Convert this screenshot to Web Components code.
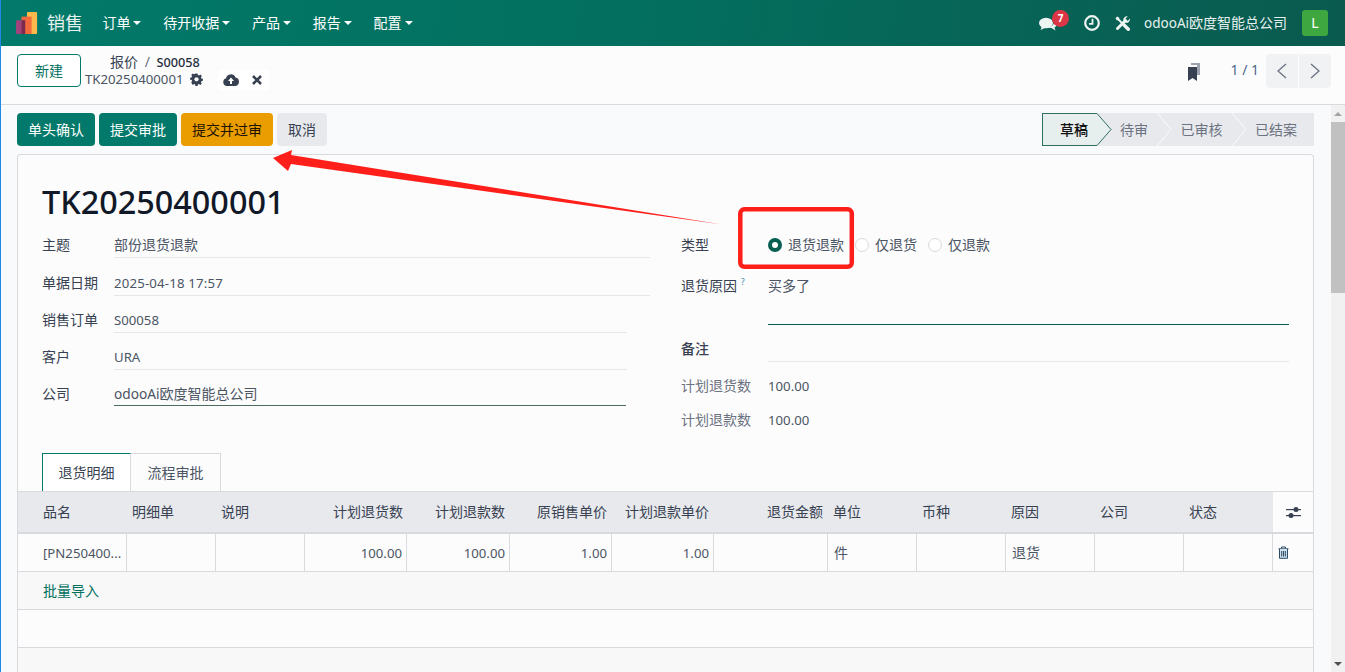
<!DOCTYPE html>
<html lang="zh"><head><meta charset="utf-8">
<style>
html,body{margin:0;height:672px;overflow:hidden;background:#f9fafb;}
body{font:14px/20px "Noto Sans","Noto Sans CJK SC",sans-serif;color:#374151;border-left:1px solid #1e88e5;box-sizing:border-box;position:relative;}
</style></head><body>
<app-navbar></app-navbar>
<control-panel></control-panel>
<div id="main" style="display:flex;height:567px">
  <form-view style="flex:1;min-width:0"></form-view>
  <fake-scroll></fake-scroll>
</div>
<red-notes></red-notes>
<script>
const F='"Noto Sans","Noto Sans CJK SC",sans-serif';
function def(name,html,init){customElements.define(name,class extends HTMLElement{constructor(){super();this.attachShadow({mode:'open'}).innerHTML=html;}connectedCallback(){init&&init(this.shadowRoot,this);}});}

def('la-t',`<style>:host{display:inline;font-size:13.2px}</style><slot></slot>`);

def('nav-item',`<style>:host{display:inline-flex;align-items:center;gap:3px;font-size:14px;color:#fff;margin-right:21.800px}
i{display:block;border:4.500px solid transparent;border-top-color:currentColor;border-bottom:0;width:0;height:0}</style><slot></slot><i></i>`);

def('app-navbar',`<style>:host{display:flex;align-items:center;height:46px;background:linear-gradient(100deg,#02796a 0%,#03705f 45%,#0a5a4f 100%);color:#fff;padding:0 17px 0 15px;box-sizing:border-box}
.brand{font-size:18px;margin:0 19.400px 0 9px;color:#e8f2f0}
.sp{flex:1}
.r{display:flex;align-items:center}
svg{display:block}
.badge{position:absolute;left:13px;top:-6px;background:#dc3545;border-radius:9px;width:17px;height:17px;font:bold 10px/17px ${F};text-align:center;color:#fff}
.co{font-size:14px;color:#e6f1ef;margin:0 15px 0 14px}
.av{width:26px;height:26px;border-radius:3px;background:#3fa73f;color:#fff;text-align:center;line-height:26px;font-size:14px}
</style>
<svg width="22" height="22" viewBox="0 0 24 24"><rect x="12" y="0" width="11" height="24" rx="1" fill="#fdb94c"/><rect x="6" y="5" width="11" height="19" fill="#f2693b"/><rect x="0" y="9" width="10" height="15" rx="1" fill="#a0437a"/><rect x="6" y="9" width="4" height="15" fill="#7c2b4f"/></svg>
<span class="brand">销售</span>
<nav-item>订单</nav-item><nav-item>待开收据</nav-item><nav-item>产品</nav-item><nav-item>报告</nav-item><nav-item>配置</nav-item>
<span class="sp"></span>
<div class="r">
<span style="position:relative;margin-right:27px;margin-top:2px"><svg width="18" height="16" viewBox="0 0 18 16" fill="#eef5f3"><ellipse cx="7" cy="7" rx="7" ry="5.300"/><path d="M3 10 1.500 14 7 11.500z"/><path d="M15.500 4.500c1.800 1 2.500 2.200 2.500 3.500 0 1.500-1 2.700-2.500 3.500l1 3-4-2.500c-1.500 0-2.800-.3-3.800-.9 3.500 0 6.800-2.200 6.800-6.600z"/></svg><span class="badge">7</span></span>
<svg width="16" height="16" viewBox="0 0 16 16" fill="none" stroke="#eef5f3" style="margin-right:15px"><circle cx="8" cy="8" r="6.800" stroke-width="2.200"/><path d="M8.500 3.800V8.800H5" stroke-width="1.800"/></svg>
<svg width="15" height="15" viewBox="0 0 15 15" fill="none" stroke="#eef5f3"><path d="M2 2l7 7" stroke-width="1.800"/><path d="M.5 2.200 2.200.5l2 1.300v2.400H1.800z" fill="#eef5f3" stroke="none"/><path d="M8.800 8.800l4.500 4.500" stroke-width="3.400" stroke-linecap="round"/><path d="M10.500 4.500 2.500 12.500" stroke-width="3" stroke-linecap="round"/><path d="M8.300 4.500C8 2 10 -.2 12.800.2L10.600 2.400l.4 1.900 1.900.4L15 2.500c.3 2.600-2 4.900-4.700 4.200z" fill="#eef5f3" stroke="none"/></svg>
<span class="co"><span style="font-size:13.500px">odooAi</span>欧度智能总公司</span>
<span class="av">L</span></div>`);

def('control-panel',`<style>:host{display:flex;height:59px;box-sizing:border-box;border-bottom:1px solid #d8dadd;padding:7px 14px 0 16px;background:#fcfcfd}
.new{width:64px;height:33px;box-sizing:border-box;border:1px solid #02796a;border-radius:4px;background:#fff;color:#02705f;text-align:center;line-height:31px;margin:1px 4px 0 0}
.bc{display:flex;flex-direction:column;line-height:17px}
.top{padding-left:25px}.top b{font-weight:500;color:#1f2d3d;font-size:12.700px}
.sep{color:#6b7280;margin:0 3px}
.l2{display:flex;align-items:center;color:#4b5563;height:17px;font-size:13.200px}
.ic{display:inline-flex;width:26px;height:20px;background:#fff;border-radius:4px;align-items:center;justify-content:center}
.sp{flex:1}
.pg{display:flex;align-items:flex-start;gap:0;color:#4b6a8a;padding-top:1px}
.pgn{display:flex;width:65px;height:34px;background:#f1f2f4;border-radius:4px;margin-left:7px}
.pgn span{flex:1;display:flex;align-items:center;justify-content:center}
.pgn span+span{border-left:1px solid #fcfcfd}
</style>
<div class="new">新建</div>
<div class="bc"><div class="top">报价 <span class="sep">/</span> <b>S00058</b></div>
<div class="l2"><span>TK20250400001</span>
<svg width="13" height="13" viewBox="0 0 13 13" style="margin:0 15px 0 7px" fill="#374151"><path d="M5.300 0h2.400l.4 1.800 1.300.6 1.600-1 1.700 1.700-1 1.600.5 1.200 1.800.4v2.400l-1.800.4-.5 1.200 1 1.600-1.700 1.700-1.600-1-1.300.6-.4 1.800H5.300l-.4-1.800-1.300-.6-1.600 1L.3 10.600l1-1.600L.8 7.800-1 7.400V5l1.800-.4.5-1.200-1-1.600L2 .1l1.600 1 1.300-.6z" transform="translate(1 .4) scale(.85)"/><circle cx="6.500" cy="6.300" r="2.100" fill="#fcfcfd"/></svg>
<span class="ic"><svg width="16" height="12" viewBox="0 0 16 12"><path fill="#374151" d="M4 12a4 4 0 0 1-1-7.800A5 5 0 0 1 12.500 3.500 4.300 4.300 0 0 1 12 12z"/><path fill="#fff" d="M8 3.500 11 7H9v3H7V7H5z"/></svg></span>
<span class="ic"><svg width="10" height="10" viewBox="0 0 10 10" stroke="#374151" stroke-width="2.600"><path d="M1 1l8 8M9 1 1 9"/></svg></span></div></div>
<span class="sp"></span>
<div class="pg"><svg width="14" height="18" viewBox="0 0 14 18" style="margin:9px 29px 0 0"><path fill="#9ca3af" d="M4 0h9v12h-3V2H4z"/><path fill="#374151" d="M1 4h9v14L5.500 15 1 18z"/></svg>
<span style="margin-top:6px">1 / 1</span>
<div class="pgn"><span><svg width="12" height="16" viewBox="0 0 12 16" fill="none" stroke="#6b7280" stroke-width="1.300"><path d="M10 1 2 8l8 7"/></svg></span><span><svg width="12" height="16" viewBox="0 0 12 16" fill="none" stroke="#6b7280" stroke-width="1.300"><path d="M2 1l8 7-8 7"/></svg></span></div></div>`);

def('act-btn',`<style>:host{display:inline-block;height:33px;line-height:33px;padding:0 11px;border-radius:4px;background:#02796a;color:#fff;box-sizing:border-box}
:host([k=warn]){background:#e99d00;color:#1d1300}:host([k=sec]){background:#e7e9ed;color:#374151}</style><slot></slot>`);

def('status-bar',`<style>:host{display:flex;height:33px;background:#e7e9ed;color:#6b7280}
.s{position:relative;height:33px;line-height:33px;text-align:center;box-sizing:border-box}
.a{width:55px;padding-left:8px;background:#e6efed;border:1px solid #2f6f62;border-right:0;color:#111;font-weight:500;position:relative;line-height:31px}
.a svg{position:absolute;left:54px;top:-1px}
.x{position:relative}
.x svg{position:absolute;left:0;top:0}
</style>
<div class="s a">草稿<svg width="15" height="33" viewBox="0 0 15 33"><path d="M0 .5h0L14 16.500 0 32.500" fill="#e6efed" stroke="#2f6f62"/></svg></div>
<div class="s" style="width:60px;padding-left:14px">待审</div>
<div class="s x" style="width:75px;padding-left:14px"><svg width="15" height="33"><path d="M0 0 14 16.500 0 33" fill="none" stroke="#fbfbfc"/></svg>已审核</div>
<div class="s x" style="width:82px;padding-left:14px;padding-right:8px"><svg width="15" height="33"><path d="M0 0 14 16.500 0 33" fill="none" stroke="#fbfbfc"/></svg>已结案</div>`);

def('field-row',`<style>:host{display:flex;align-items:flex-start;box-sizing:border-box}
.l{flex:none;width:var(--lw,72px);color:#374151;white-space:nowrap}
:host([dim]) .l{color:#6b7280}
.v{flex:1;min-width:0;box-sizing:border-box;min-height:var(--vh,23px);color:#4b5563;border-bottom:1px solid var(--line,transparent);}
</style><div class="l"><slot name="l"></slot></div><div class="v"><slot></slot></div>`);

def('radio-opt',`<style>:host{display:inline-flex;align-items:center;gap:6px;color:#4b5563}
i{display:block;box-sizing:border-box;width:14px;height:14px;border-radius:50%;border:1px solid #d8dadd;background:#fff}
:host([on]) i{border:4px solid #065f50;background:#fff}</style><i></i><slot></slot>`);

def('order-table',`<style>:host{display:block;margin:0;border-top:1px solid #d8dadd;}
.g{display:grid;grid-template-columns:109px 89px 89px 102px 103px 102px 102px 114px 89px 89px 89px 89px 89px 40px}
.h>div{height:40px;line-height:40px;background:#e7e9ed;padding:0 3px 0 25px;box-sizing:border-box;color:#374151;white-space:nowrap;}
.h>.o{padding-left:5px}
.h>.n{text-align:right;padding:0 5px 0 0}
.h>.n.p4{padding-right:4px}
.h>.adj{background:#fcfcfd;padding:0;display:flex;align-items:center;justify-content:center}
.b{border-top:2px solid #d8dadd}
.b>div{height:38px;line-height:37px;box-sizing:border-box;border-right:1px solid #d8dadd;border-bottom:1px solid #d8dadd;padding:0 6px;color:#4b5563;background:#fcfcfd;white-space:nowrap}
.b>.n{text-align:right;padding-right:4px}
.b>.f{padding:0 0 0 25px}
.b>div:last-child{border-right:0;display:flex;align-items:center;padding-left:5px}
.row{height:38px;line-height:37px;box-sizing:border-box;border-bottom:1px solid #d8dadd;background:#f8f8f8;padding-left:25px;color:#02705f}
.e{height:38px;box-sizing:border-box;border-bottom:1px solid #d8dadd;background:#fcfcfd}
.f2{height:40px;background:#f8f8f8}
</style>
<div class="g h"><div>品名</div><div class="o">明细单</div><div class="o">说明</div><div class="n p4">计划退货数</div><div class="n">计划退款数</div><div class="n">原销售单价</div><div class="n">计划退款单价</div><div class="n">退货金额</div><div class="o">单位</div><div class="o">币种</div><div class="o">原因</div><div class="o">公司</div><div class="o">状态</div>
<div class="adj"><svg width="15" height="13" viewBox="0 0 15 13" fill="#374151"><rect y="3" width="15" height="1.200"/><rect y="9" width="15" height="1.200"/><circle cx="10" cy="3.600" r="2.500"/><circle cx="5" cy="9.600" r="2.500"/></svg></div></div>
<div class="g b"><div class="f"><la-t>[PN250400...</la-t></div><div></div><div></div><div class="n"><la-t>100.00</la-t></div><div class="n"><la-t>100.00</la-t></div><div class="n"><la-t>1.00</la-t></div><div class="n"><la-t>1.00</la-t></div><div></div><div>件</div><div></div><div>退货</div><div></div><div></div>
<div><svg width="11" height="13" viewBox="0 0 11 13" fill="none" stroke="#2a4a66" stroke-width="1"><path d="M.5 2.800h10M3.500 2.500V1h4v1.500"/><path d="M1.500 3v9.300h8V3" fill="#cfe0ea"/><path d="M3.700 5v5.500M5.500 5v5.500M7.300 5v5.500"/></svg></div></div>
<div class="row">批量导入</div><div class="e"></div><div class="f2"></div>`);

def('form-view',`<style>:host{display:block;padding:8px 17px 0 16px;box-sizing:border-box;overflow:hidden}
.btns{display:flex;align-items:flex-start;gap:4px;height:41px}
.sp{flex:1}
.sheet{border:1px solid #d8dadd;border-radius:4px 4px 0 0;border-bottom:0;background:#fcfcfd;height:520px;box-sizing:border-box;}
.pad{padding:0 24px}
h1{font:500 32.400px/40px ${F};color:#111827;margin:0;padding-top:26px;height:46px;box-sizing:content-box}
.cols{display:grid;grid-template-columns:663px 1fr;height:226px;padding-top:8px;box-sizing:border-box}
.tabs{display:flex;margin-left:24px;height:38px;box-sizing:border-box}
.t{width:90px;height:38px;box-sizing:border-box;border:1px solid #d8dadd;border-bottom:0;text-align:center;line-height:38px;color:#4b5563}
.t.on{width:89px;border-color:#02796a #d8dadd #d8dadd #02796a;color:#374151;background:#fff}
.t+.t{border-left:0}
</style>
<div class="btns"><act-btn>单头确认</act-btn><act-btn>提交审批</act-btn><act-btn k="warn">提交并过审</act-btn><act-btn k="sec">取消</act-btn><span class="sp"></span><status-bar></status-bar></div>
<div class="sheet">
<div class="pad"><h1>TK20250400001</h1></div>
<div class="cols">
<div class="pad">
<field-row style="--line:#e5e7eb;height:38px;width:608px"><span slot="l">主题</span>部份退货退款</field-row>
<field-row style="--line:#e5e7eb;height:37px;width:608px"><span slot="l">单据日期</span><la-t style="letter-spacing:.18px">2025-04-18 17:57</la-t></field-row>
<field-row style="--line:#e5e7eb;height:37px;width:585px"><span slot="l">销售订单</span><la-t>S00058</la-t></field-row>
<field-row style="--line:#e5e7eb;height:37px;width:585px"><span slot="l">客户</span><la-t>URA</la-t></field-row>
<field-row style="--line:#4b6b63;--vh:22px;height:37px;width:584px"><span slot="l">公司</span><la-t style="font-size:13.700px">odooAi</la-t>欧度智能总公司</field-row>
</div>
<div style="--lw:87px;padding-right:24px">
<field-row style="height:41px"><span slot="l">类型</span><div style="display:flex;gap:11px"><radio-opt on>退货退款</radio-opt><radio-opt>仅退货</radio-opt><radio-opt>仅退款</radio-opt></div></field-row>
<field-row style="--line:#065f50;--vh:49px;height:63px"><span slot="l">退货原因 <sup style="font-size:9px;line-height:0;color:#4b8fa8">?</sup></span>买多了</field-row>
<field-row style="--line:#e5e7eb;--vh:23px;height:37px"><span slot="l" style="font-weight:500">备注</span></field-row>
<field-row dim style="height:34px"><span slot="l">计划退货数</span><la-t>100.00</la-t></field-row>
<field-row dim style="height:34px"><span slot="l">计划退款数</span><la-t>100.00</la-t></field-row>
</div></div>
<div class="tabs"><div class="t on">退货明细</div><div class="t">流程审批</div></div>
<order-table></order-table>
</div>`);

def('fake-scroll',`<style>:host{display:flex;flex-direction:column;align-items:center;flex:none;width:14px;background:#f1f1f1;height:567px}
.u,.d{height:17px;width:14px;display:flex;align-items:center;justify-content:center}
.u i,.d i{display:block;border:4px solid transparent;width:0;height:0}
.u i{border-bottom-color:#a3a3a3;border-top:0}.d i{border-top-color:#505050;border-bottom:0}
.th{width:14px;height:171px;background:#c1c1c1}.sp{flex:1}</style><div class="u"><i></i></div><div class="th"></div><div class="sp"></div><div class="d"><i></i></div>`);

def('red-notes',`<style>:host{display:block;position:absolute;left:-1px;top:0;width:1345px;height:672px;pointer-events:none}
svg{position:absolute;left:0;top:0}</style>
<svg width="1345" height="672"><polygon points="722,224.500 291,164 288,171 273,158 292,150 291,155" fill="#ff1f1a"/><rect x="740.300" y="209.300" width="111.500" height="57.500" rx="4" fill="none" stroke="#ff1f1a" stroke-width="4.500"/></svg>`);
</script>
</body></html>
